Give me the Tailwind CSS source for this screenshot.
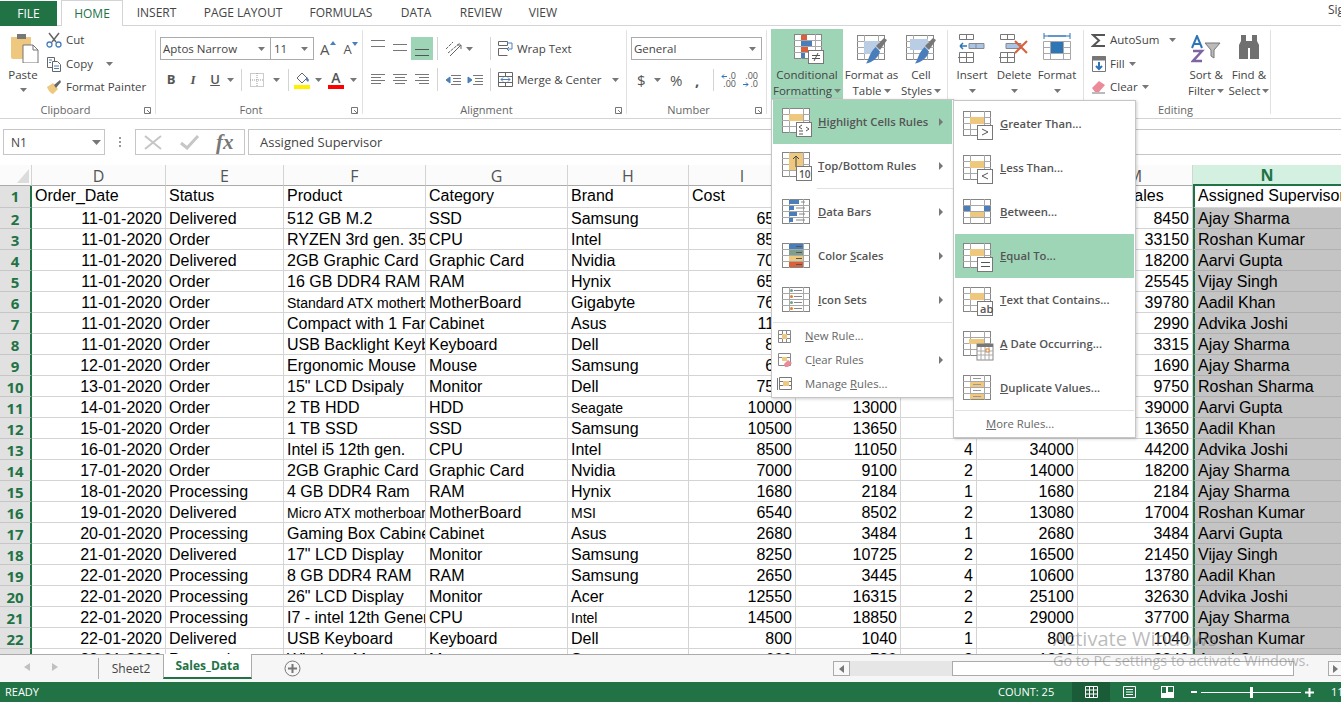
<!DOCTYPE html>
<html lang="en">
  <head>
    <meta charset="UTF-8" />
    <title>Sales_Data - Excel</title>
    <script src="https://cdn.jsdelivr.net/npm/@tailwindcss/browser@4"></script>
  </head>
  <body class="relative w-[1341px] h-[702px] overflow-hidden flex flex-col bg-white text-[#444] font-['Open_Sans',sans-serif] text-[12px]">
    <svg class="hidden">
      <defs>
        <g id="grid" fill="none" stroke="#858585">
          <rect x="0.5" y="0.5" width="27" height="24" fill="#fff" />
          <path d="M7.5 0v25M21.5 0v25M0 6.5h28M0 12.5h28M0 18.5h28" stroke="#a8a8a8" />
        </g>
        <g id="brush">
          <path d="M30 5l-3-2-8 8 4 4z" fill="#777" />
          <path d="M18.500 12l4.500 4.500c-2 7-8 11-14 12 3-4 3-10 9.500-16.500z" fill="#4a7ebb" />
        </g>
        <path id="arrow" d="M0 0h7l-3.500 4z" fill="#777" />
        <path id="chev" d="M0 0l4 4-4 4z" fill="#777" />
      </defs>
    </svg>

    <!-- tab strip -->
    <div class="h-[26px] shrink-0 flex items-end border-b border-[#d4d4d4]">
      <div class="w-[57px] h-[25px] mb-[-1px] bg-[#217346] text-white flex items-center justify-center">FILE</div>
      <div class="w-[62px] h-[26px] mb-[-1px] ml-[4px] bg-white border border-b-0 border-[#d4d4d4] text-[#217346] flex items-center justify-center">HOME</div>
      <div class="w-[67px] h-[25px] flex items-center justify-center">INSERT</div>
      <div class="w-[106px] h-[25px] flex items-center justify-center">PAGE LAYOUT</div>
      <div class="w-[90px] h-[25px] flex items-center justify-center">FORMULAS</div>
      <div class="w-[60px] h-[25px] flex items-center justify-center">DATA</div>
      <div class="w-[70px] h-[25px] flex items-center justify-center">REVIEW</div>
      <div class="w-[54px] h-[25px] flex items-center justify-center">VIEW</div>
      <div class="ml-[758px] w-[13px] h-[25px] overflow-hidden whitespace-nowrap pt-[1px]">Sign in</div>
    </div>

    <!-- ribbon -->
    <div class="h-[93px] shrink-0 flex border-b border-[#d4d4d4] pt-[4px] text-[11.5px] whitespace-nowrap">
      <!-- clipboard -->
      <div class="w-[156px] h-[84px] border-r border-[#e1e1e1] flex flex-col">
        <div class="h-[72px] flex">
          <div class="w-[46px] flex flex-col items-center">
            <svg class="mt-[3px] ml-[3px]" width="30" height="30" viewBox="0 0 30 30">
              <path d="M1 4h20v22H3a2 2 0 0 1-2-2z" fill="#edc87e" />
              <rect x="7" y="1" width="9" height="5" fill="#777" />
              <path d="M13 12h10l5 5v13H13z" fill="#fff" stroke="#777" />
              <path d="M23 12v5h5" fill="none" stroke="#777" />
            </svg>
            <div class="mt-[4px] leading-[16px]">Paste</div>
            <svg class="mt-[5px]" width="7" height="4"><use href="#arrow" /></svg>
          </div>
          <div class="flex flex-col mt-[-2px]">
            <div class="h-[24px] flex items-center gap-[4px]">
              <svg width="16" height="16" viewBox="0 0 16 16" fill="none" stroke="#4a7ebb" stroke-width="1.3"><circle cx="3.500" cy="12.500" r="2.500" /><circle cx="12.500" cy="12.500" r="2.500" /><path d="M3 1l7 9M13 1l-7 9" stroke="#666" stroke-width="1.500" /></svg>
              <span>Cut</span>
            </div>
            <div class="h-[23px] flex items-center gap-[4px]">
              <svg width="16" height="16" viewBox="0 0 16 16" fill="#fff" stroke="#666"><path d="M1.500 1.500h7v10h-7z" /><path d="M6.500 5.500h5l3 3v7h-8z" /><path d="M3 4h3M3 6.500h2M8 10h5M8 12.500h5" stroke="#4a7ebb" /></svg>
              <span>Copy</span>
              <svg class="ml-[9px]" width="7" height="4"><use href="#arrow" /></svg>
            </div>
            <div class="h-[23px] flex items-center gap-[4px]">
              <svg width="16" height="16" viewBox="0 0 16 16"><path d="M1 8l6-4 5 6-5 5c-2 0-5-4-6-7z" fill="#edc87e" /><path d="M8 6l6-5 1 2-5 6z" fill="#666" /></svg>
              <span>Format Painter</span>
            </div>
          </div>
        </div>
        <div class="h-[12px] grid grid-cols-[1fr_auto_1fr] items-center leading-[16px] text-[#666] text-[11px] pr-[4px]">
          <span></span><span class="mr-[20px]">Clipboard</span>
          <svg class="justify-self-end" width="7" height="7" fill="none" stroke="#777"><path d="M.5.5h6v6h-6zM3 3l3 3" /></svg>
        </div>
      </div>

      <!-- font -->
      <div class="w-[207px] h-[84px] border-r border-[#e1e1e1] flex flex-col pl-[4px]">
        <div class="h-[72px] flex flex-col">
          <div class="flex items-center mt-[7px] h-[23px]">
            <div class="w-[111px] h-[23px] border border-[#ababab] flex items-center justify-between pl-[2px] pr-[5px]">
              <span>Aptos Narrow</span><svg width="7" height="4"><use href="#arrow" /></svg>
            </div>
            <div class="w-[43px] h-[23px] border border-l-0 border-[#ababab] flex items-center justify-between pl-[3px] pr-[5px]">
              <span>11</span><svg width="7" height="4"><use href="#arrow" /></svg>
            </div>
            <div class="ml-[6px] flex items-end text-[15px] leading-none text-[#555]">A<svg class="mb-[12px]" width="6" height="4"><path d="M3 0l3 4H0z" fill="#4a7ebb" /></svg></div>
            <div class="ml-[8px] flex items-end text-[13px] leading-none text-[#555]">A<svg class="mb-[10px]" width="6" height="4"><path d="M0 0h6L3 4z" fill="#4a7ebb" /></svg></div>
          </div>
          <div class="flex items-center mt-[9px] h-[22px] text-[13px] text-[#555]">
            <span class="w-[22px] text-center font-bold">B</span>
            <span class="w-[22px] text-center italic font-['Liberation_Serif'] font-bold">I</span>
            <span class="w-[22px] text-center font-semibold underline">U</span>
            <svg class="ml-[1px]" width="7" height="4"><use href="#arrow" /></svg>
            <div class="w-px h-[22px] bg-[#d4d4d4] ml-[7px]"></div>
            <svg class="ml-[8px]" width="14" height="14" fill="none" stroke="#999" stroke-dasharray="1 1"><path d="M.5.5h13v13H.5zM7 0v14M0 7h14" /></svg>
            <svg class="ml-[9px]" width="7" height="4"><use href="#arrow" /></svg>
            <div class="w-px h-[22px] bg-[#d4d4d4] ml-[8px]"></div>
            <div class="ml-[5px] flex flex-col">
              <svg width="16" height="12" viewBox="0 0 16 12"><path d="M3 6l5-5 5 5-5 5z" fill="#fff" stroke="#666" /><path d="M13 5l2 3-1 2-2-2z" fill="#4a7ebb" /></svg>
              <div class="w-[16px] h-[4px] mt-[1px] bg-[#ffef00]"></div>
            </div>
            <svg class="ml-[5px]" width="7" height="4"><use href="#arrow" /></svg>
            <div class="ml-[6px] flex flex-col items-center">
              <span class="text-[14px] leading-[12px] font-semibold text-[#555]">A</span>
              <div class="w-[16px] h-[4px] mt-[1px] bg-[#ff0000]"></div>
            </div>
            <svg class="ml-[6px]" width="7" height="4"><use href="#arrow" /></svg>
          </div>
        </div>
        <div class="h-[12px] grid grid-cols-[1fr_auto_1fr] items-center leading-[16px] text-[#666] text-[11px] pr-[4px]">
          <span></span><span class="mr-[16px]">Font</span>
          <svg class="justify-self-end" width="7" height="7" fill="none" stroke="#777"><path d="M.5.5h6v6h-6zM3 3l3 3" /></svg>
        </div>
      </div>

      <!-- alignment -->
      <div class="w-[264px] h-[84px] border-r border-[#e1e1e1] flex flex-col">
        <div class="h-[72px] flex pl-[4px]">
          <div class="flex flex-col">
            <div class="flex h-[23px] mt-[7px]">
              <div class="w-[22px] flex justify-center pt-[3px]"><svg width="14" height="7" stroke="#777"><path d="M0 .5h14M0 6.500h14" /></svg></div>
              <div class="w-[22px] flex justify-center pt-[7px]"><svg width="14" height="7" stroke="#777"><path d="M0 .5h14M0 6.500h14" /></svg></div>
              <div class="w-[22px] h-[23px] bg-[#9fd5b7] flex justify-center pt-[12px]"><svg width="14" height="7" stroke="#555"><path d="M0 .5h14M0 6.500h14" /></svg></div>
            </div>
            <div class="flex h-[23px] mt-[7px] items-center">
              <div class="w-[22px] flex justify-center"><svg width="14" height="10" stroke="#777"><path d="M0 .5h14M0 3.500h10M0 6.500h14M0 9.500h10" /></svg></div>
              <div class="w-[22px] flex justify-center"><svg width="14" height="10" stroke="#777"><path d="M0 .5h14M2 3.500h10M0 6.500h14M2 9.500h10" /></svg></div>
              <div class="w-[22px] flex justify-center"><svg width="14" height="10" stroke="#777"><path d="M0 .5h14M4 3.500h10M0 6.500h14M4 9.500h10" /></svg></div>
            </div>
          </div>
          <div class="w-[53px] flex flex-col ml-[4px]">
            <div class="flex h-[23px] mt-[7px] items-center border-l border-[#d4d4d4] pl-[7px] gap-[4px]">
              <svg width="17" height="17" viewBox="0 0 17 17" fill="none" stroke="#666"><path d="M1 9l7-7M3 13l12-10" stroke-dasharray="3 1" /><path d="M5 16L16 5M12 5h4v4" /></svg>
              <svg width="7" height="4"><use href="#arrow" /></svg>
            </div>
            <div class="flex h-[23px] mt-[8px] items-center border-l border-[#d4d4d4] pl-[7px] gap-[6px]">
              <svg width="16" height="10" fill="none" stroke="#777"><path d="M6 .5h10M8 3.500h8M8 6.500h8M6 9.500h10" /><path d="M5 2L1 5l4 3z" fill="#4a7ebb" stroke="#4a7ebb" /></svg>
              <svg width="16" height="10" fill="none" stroke="#777"><path d="M6 .5h10M8 3.500h8M8 6.500h8M6 9.500h10" /><path d="M1 2l4 3-4 3z" fill="#4a7ebb" stroke="#4a7ebb" /></svg>
            </div>
          </div>
          <div class="flex flex-col">
            <div class="flex h-[23px] mt-[7px] items-center border-l border-[#d4d4d4] pl-[7px] gap-[4px]">
              <svg width="15" height="15" viewBox="0 0 15 15" fill="none" stroke="#666"><path d="M.5.5h9v4h-9zM.5 7.500h9M.5 7.500v7h9" /><path d="M9 2h5M14 2v6h-5M11 6l-2 2 2 2" stroke="#4a7ebb" /></svg>
              <span>Wrap Text</span>
            </div>
            <div class="flex h-[23px] mt-[8px] items-center border-l border-[#d4d4d4] pl-[7px] gap-[4px]">
              <svg width="15" height="15" viewBox="0 0 15 15" fill="none" stroke="#666"><path d="M.5.5h14v14H.5zM0 4.500h15M0 10.500h15M7.500 0v4M7.500 11v4" /><path d="M3 7.500h9M3 7.500l2-2M3 7.500l2 2M12 7.500l-2-2M12 7.500l-2 2" stroke="#4a7ebb" /></svg>
              <span>Merge &amp; Center</span>
              <svg class="ml-[6px]" width="7" height="4"><use href="#arrow" /></svg>
            </div>
          </div>
        </div>
        <div class="h-[12px] grid grid-cols-[1fr_auto_1fr] items-center leading-[16px] text-[#666] text-[11px] pr-[4px]">
          <span></span><span class="mr-[12px]">Alignment</span>
          <svg class="justify-self-end" width="7" height="7" fill="none" stroke="#777"><path d="M.5.5h6v6h-6zM3 3l3 3" /></svg>
        </div>
      </div>

      <!-- number -->
      <div class="w-[140px] h-[84px] border-r border-[#e1e1e1] flex flex-col pl-[4px]">
        <div class="h-[72px] flex flex-col">
          <div class="w-[131px] h-[23px] mt-[7px] border border-[#ababab] flex items-center justify-between pl-[2px] pr-[5px]">
            <span>General</span><svg width="7" height="4"><use href="#arrow" /></svg>
          </div>
          <div class="flex items-center h-[22px] mt-[9px] text-[15px] text-[#555]">
            <span class="ml-[6px] w-[12px]">$</span>
            <svg class="ml-[5px]" width="7" height="4"><use href="#arrow" /></svg>
            <span class="ml-[9px] w-[20px]">%</span>
            <span class="ml-[5px] w-[10px] font-bold">,</span>
            <div class="w-px h-[22px] bg-[#d4d4d4] ml-[8px]"></div>
            <div class="ml-[7px] w-[15px] text-[9px] leading-[8px] text-right">
              <div class="flex items-center justify-end gap-px"><svg width="6" height="5" fill="none" stroke="#2e75b6"><path d="M6 2.500H1M3 .5l-2 2 2 2" /></svg>.0</div>
              <div>.00</div>
            </div>
            <div class="ml-[7px] w-[15px] text-[9px] leading-[8px] text-right">
              <div>.00</div>
              <div class="flex items-center justify-end gap-px"><svg width="6" height="5" fill="none" stroke="#2e75b6"><path d="M0 2.500h5M3 .5l2 2-2 2" /></svg>.0</div>
            </div>
          </div>
        </div>
        <div class="h-[12px] grid grid-cols-[1fr_auto_1fr] items-center leading-[16px] text-[#666] text-[11px] pr-[4px]">
          <span></span><span class="mr-[16px]">Number</span>
          <svg class="justify-self-end" width="7" height="7" fill="none" stroke="#777"><path d="M.5.5h6v6h-6zM3 3l3 3" /></svg>
        </div>
      </div>

      <!-- styles -->
      <div class="w-[181px] h-[84px] border-r border-[#e1e1e1] flex pl-[4px]">
        <div class="w-[72px] h-[70px] mt-[-1px] bg-[#9fd5b7] flex flex-col items-center text-center leading-[16px]">
          <svg class="mt-[5px] ml-[3px]" width="30" height="30" viewBox="0 0 30 30">
            <use href="#grid" />
            <path d="M7 1h6v5H7z" fill="#d9603b" /><path d="M7 7h11v5H7z" fill="#4a7ebb" /><path d="M7 13h7v5H7z" fill="#d9603b" /><path d="M7 19h4v5H7z" fill="#4a7ebb" />
            <rect x="14.500" y="16.500" width="15" height="13" fill="#fff" stroke="#777" />
            <path d="M18 21.500h8M18 24.500h8M24 19l-4 8" stroke="#555" fill="none" />
          </svg>
          <div class="mt-[3px]">Conditional</div>
          <div class="flex items-center gap-[2px]">Formatting<svg width="7" height="4"><use href="#arrow" /></svg></div>
        </div>
        <div class="w-[55px] ml-[1px] flex flex-col items-center text-center leading-[16px]">
          <svg class="mt-[5px]" width="30" height="30" viewBox="0 0 30 30">
            <use href="#grid" />
            <rect x="7" y="6" width="15" height="13" fill="#b9cde5" />
            <use href="#brush" />
          </svg>
          <div class="mt-[2px]">Format as</div>
          <div class="flex items-center gap-[2px]">Table<svg width="7" height="4"><use href="#arrow" /></svg></div>
        </div>
        <div class="w-[44px] flex flex-col items-center text-center leading-[16px]">
          <svg class="mt-[5px]" width="30" height="30" viewBox="0 0 30 30">
            <use href="#grid" />
            <rect x="4" y="4" width="18" height="11" fill="#b9cde5" />
            <use href="#brush" />
          </svg>
          <div class="mt-[2px]">Cell</div>
          <div class="flex items-center gap-[2px]">Styles<svg width="7" height="4"><use href="#arrow" /></svg></div>
        </div>
      </div>

      <!-- cells -->
      <div class="w-[136px] h-[84px] border-r border-[#e1e1e1] flex pl-[3px] text-center leading-[16px]">
        <div class="w-[42px] flex flex-col items-center">
          <svg class="mt-[3px]" width="28" height="30" viewBox="0 0 28 30" fill="none" stroke="#777"><path d="M1.500 1.500h14v5h-14zM8.500 1v5M1.500 19.500h14v10h-14zM0 24.500h16M8.500 19v10" /><path d="M11 10.500h15v5H11zM18 10v5" fill="#a9c4e4" stroke="#888" /><path d="M2 13h7M2 13l3-3M2 13l3 3" stroke="#2e75b6" stroke-width="1.500" /></svg>
          <div class="mt-[4px]">Insert</div>
          <svg class="mt-[6px]" width="7" height="4"><use href="#arrow" /></svg>
        </div>
        <div class="w-[42px] flex flex-col items-center">
          <svg class="mt-[3px]" width="30" height="30" viewBox="0 0 30 30" fill="none" stroke="#777"><path d="M1.500 1.500h14v5h-14zM8.500 1v5M1.500 19.500h14v10h-14zM0 24.500h16M8.500 19v10" /><path d="M7 10.500h15v5H7z" fill="#a9c4e4" stroke="#888" /><path d="M16 8l12 12M28 8L16 20" stroke="#d9603b" stroke-width="2" /></svg>
          <div class="mt-[4px]">Delete</div>
          <svg class="mt-[6px]" width="7" height="4"><use href="#arrow" /></svg>
        </div>
        <div class="w-[44px] flex flex-col items-center">
          <svg class="mt-[3px]" width="28" height="30" viewBox="0 0 28 30" fill="none" stroke="#777"><path d="M1 3h26M1 0v6M27 0v6M5 3h18" stroke="#2e75b6" /><path d="M.5 8.500h27v18H.5zM7.500 8v18M20.500 8v18M0 14.500h28M0 20.500h28" stroke="#a8a8a8" /><rect x="8" y="9" width="12" height="11" fill="#2e75b6" stroke="none" /></svg>
          <div class="mt-[4px]">Format</div>
          <svg class="mt-[6px]" width="7" height="4"><use href="#arrow" /></svg>
        </div>
      </div>

      <!-- editing -->
      <div class="w-[187px] h-[84px] border-r border-[#e1e1e1] flex flex-col pl-[7px]">
        <div class="h-[72px] flex">
          <div class="w-[95px] flex flex-col mt-[-2px]">
            <div class="h-[24px] flex items-center gap-[4px]">
              <svg width="15" height="15" viewBox="0 0 15 15" fill="none" stroke="#555" stroke-width="2"><path d="M14 2H2l6 5.500L2 13h12" /></svg>
              <span>AutoSum</span>
              <svg class="ml-[6px]" width="7" height="4"><use href="#arrow" /></svg>
            </div>
            <div class="h-[23px] flex items-center gap-[4px] pl-[1px]">
              <svg width="14" height="16" viewBox="0 0 14 16" fill="none" stroke="#777"><path d="M.5.5h13v15H.5z" /><path d="M0 1h14v3H0z" fill="#777" /><path d="M7 6v7M4 10l3 3 3-3" stroke="#2e75b6" stroke-width="2" /></svg>
              <span>Fill</span>
              <svg width="7" height="4"><use href="#arrow" /></svg>
            </div>
            <div class="h-[23px] flex items-center gap-[4px]">
              <svg width="15" height="15" viewBox="0 0 15 15"><path d="M1 9l7-7 6 4-6 7H4z" fill="#ec8a9a" /><path d="M1 14h13" stroke="#777" /></svg>
              <span>Clear</span>
              <svg width="7" height="4"><use href="#arrow" /></svg>
            </div>
          </div>
          <div class="w-[44px] flex flex-col items-center text-center leading-[16px]">
            <svg class="mt-[5px]" width="30" height="28" viewBox="0 0 30 28" fill="none"><path d="M1 13L6 1l5 12M3 9h6" stroke="#2e75b6" stroke-width="2" /><path d="M2 16h9L2 26h9" stroke="#8064a2" stroke-width="2.500" /><path d="M14 8h15l-6 7v8l-3-2v-6z" fill="#bbb" stroke="#777" /></svg>
            <div class="mt-[4px]">Sort &amp;</div>
            <div class="flex items-center gap-[2px]">Filter<svg width="7" height="4"><use href="#arrow" /></svg></div>
          </div>
          <div class="w-[43px] flex flex-col items-center text-center leading-[16px]">
            <svg class="mt-[5px]" width="26" height="26" viewBox="0 0 26 26" fill="#707070"><path d="M5 0h5v6h6V0h5v6l2 4v14h-9V13h-2v11H3V10l2-4z" /></svg>
            <div class="mt-[6px]">Find &amp;</div>
            <div class="flex items-center gap-[2px]">Select<svg width="7" height="4"><use href="#arrow" /></svg></div>
          </div>
        </div>
        <div class="h-[12px] text-center leading-[16px] text-[#666] text-[11px] pr-[10px]">Editing</div>
      </div>
    </div>

    <!-- formula bar -->
    <div class="h-[46px] shrink-0 flex items-start pt-[10px]">
      <div class="ml-[3px] w-[102px] h-[26px] pt-px border border-[#c6c6c6] flex items-center justify-between pl-[7px] pr-[3px] text-[12px]">
        <span>N1</span><svg width="9" height="5"><path d="M0 0h9L4.500 5z" fill="#777" /></svg>
      </div>
      <div class="w-[30px] h-[26px] flex items-center justify-center"><svg width="3" height="11" fill="#999"><rect width="2" height="2" /><rect y="4" width="2" height="2" /><rect y="8" width="2" height="2" /></svg></div>
      <div class="w-[110px] h-[26px] border border-[#c6c6c6] flex items-center pl-[7px]">
        <svg width="20" height="15" fill="none" stroke="#c6c6c6" stroke-width="2"><path d="M2 1l16 13M18 1L2 14" /></svg>
        <svg class="ml-[17px]" width="20" height="15" fill="none" stroke="#c6c6c6" stroke-width="3"><path d="M1 8l6 5L18 1" /></svg>
        <span class="ml-[16px] font-['Liberation_Serif'] italic font-bold text-[21px] leading-none text-[#777]">fx</span>
      </div>
      <div class="ml-[3px] flex-1 h-[26px] pt-px border border-r-0 border-[#c6c6c6] flex items-center pl-[11px] text-[13px]">Assigned Supervisor</div>
    </div>

    <!-- sheet -->
    <div class="h-[489px] shrink-0 overflow-hidden font-['Liberation_Sans',Arial,sans-serif] text-[16px] text-black">
      <table class="table-fixed border-separate border-spacing-0 w-[1341px] [&_td]:h-[21px] [&_td]:p-0 [&_td]:px-[3px] [&_td]:pt-[2px] [&_td]:leading-[18px] [&_td]:whitespace-nowrap [&_td]:overflow-hidden [&_td]:border-r [&_td]:border-b [&_td]:border-[#d4d4d4] [&_tbody_th]:border-r-2 [&_tbody_th]:border-b [&_tbody_th]:border-r-[#217346] [&_tbody_th]:border-b-[#c6c6c6] [&_tbody_th]:bg-[#e1e1e1] [&_tbody_th]:text-[#217346] [&_tbody_th]:font-['Open_Sans'] [&_tbody_th]:font-bold [&_tbody_th]:text-[15px] [&_tbody_th]:leading-[18px] [&_tbody_th]:p-0 [&_tbody_th]:pt-[2px] [&_thead_th]:h-[20px] [&_thead_th]:p-0 [&_thead_th]:pt-px [&_thead_th]:font-normal [&_thead_th]:font-['Open_Sans'] [&_thead_th]:text-[#555] [&_thead_th]:leading-[18px] [&_thead_th]:bg-[#fbfbfb] [&_thead_th]:border-r [&_thead_th]:border-r-[#d4d4d4] [&_thead_th]:border-b [&_thead_th]:border-b-[#ababab] [&_td:nth-child(2)]:text-right [&_td:nth-child(7)]:text-right [&_td:nth-child(8)]:text-right [&_td:nth-child(9)]:text-right [&_td:nth-child(10)]:text-right [&_td:nth-child(11)]:text-right [&_td:nth-child(12)]:bg-[#c4c4c4] [&_td:nth-child(12)]:border-l-2 [&_td:nth-child(12)]:border-l-[#217346] [&_td:nth-child(12)]:border-b-[#b0b0b0] [&_td:nth-child(12)]:border-r-0">
        <colgroup>
          <col class="w-[32px]" /><col class="w-[134px]" /><col class="w-[118px]" /><col class="w-[142px]" /><col class="w-[142px]" /><col class="w-[121px]" /><col class="w-[107px]" /><col class="w-[105px]" /><col class="w-[76px]" /><col class="w-[101px]" /><col class="w-[115px]" /><col class="w-[148px]" />
        </colgroup>
        <thead>
          <tr>
            <th><svg class="ml-[17px]" width="12" height="14"><path d="M12 0v14H0z" fill="#dcdcdc" /></svg></th>
            <th>D</th><th>E</th><th>F</th><th>G</th><th>H</th><th>I</th><th>J</th><th>K</th><th>L</th><th>M</th>
            <th class="bg-[#d3f0e0]! text-[#217346]! font-bold! border-b-2! border-b-[#217346]! border-r-0!">N</th>
          </tr>
        </thead>
        <tbody>
          <tr class="[&>td]:text-left! [&>td]:h-[22px]! [&>td]:pt-0! [&>td]:pb-px! [&>td]:leading-[20px]! [&>th]:pt-0! [&>th]:pb-px! [&>td:nth-child(12)]:bg-white! [&>td:nth-child(12)]:border-b-[#d4d4d4]!"><th>1</th><td>Order_Date</td><td>Status</td><td>Product</td><td>Category</td><td>Brand</td><td>Cost</td><td>Selling_Price</td><td>Qty</td><td>Total_Cost</td><td>Total_Sales</td><td>Assigned Supervisor</td></tr>
          <tr><th>2</th><td>11-01-2020</td><td>Delivered</td><td>512 GB M.2</td><td>SSD</td><td>Samsung</td><td>6500</td><td>8450</td><td>1</td><td>6500</td><td>8450</td><td>Ajay Sharma</td></tr>
          <tr><th>3</th><td>11-01-2020</td><td>Order</td><td>RYZEN 3rd gen. 3500</td><td>CPU</td><td>Intel</td><td>8500</td><td>11050</td><td>3</td><td>25500</td><td>33150</td><td>Roshan Kumar</td></tr>
          <tr><th>4</th><td>11-01-2020</td><td>Delivered</td><td>2GB Graphic Card</td><td>Graphic Card</td><td>Nvidia</td><td>7000</td><td>9100</td><td>2</td><td>14000</td><td>18200</td><td>Aarvi Gupta</td></tr>
          <tr><th>5</th><td>11-01-2020</td><td>Order</td><td>16 GB DDR4 RAM</td><td>RAM</td><td>Hynix</td><td>6550</td><td>8515</td><td>3</td><td>19650</td><td>25545</td><td>Vijay Singh</td></tr>
          <tr><th>6</th><td>11-01-2020</td><td>Order</td><td class="text-sm">Standard ATX motherboard</td><td>MotherBoard</td><td>Gigabyte</td><td>7650</td><td>9945</td><td>4</td><td>30600</td><td>39780</td><td>Aadil Khan</td></tr>
          <tr><th>7</th><td>11-01-2020</td><td>Order</td><td>Compact with 1 Fan</td><td>Cabinet</td><td>Asus</td><td>1150</td><td>1495</td><td>2</td><td>2300</td><td>2990</td><td>Advika Joshi</td></tr>
          <tr><th>8</th><td>11-01-2020</td><td>Order</td><td>USB Backlight Keyboard</td><td>Keyboard</td><td>Dell</td><td>850</td><td>1105</td><td>3</td><td>2550</td><td>3315</td><td>Ajay Sharma</td></tr>
          <tr><th>9</th><td>12-01-2020</td><td>Order</td><td>Ergonomic Mouse</td><td>Mouse</td><td>Samsung</td><td>650</td><td>845</td><td>2</td><td>1300</td><td>1690</td><td>Ajay Sharma</td></tr>
          <tr><th>10</th><td>13-01-2020</td><td>Order</td><td>15" LCD Dsipaly</td><td>Monitor</td><td>Dell</td><td>7500</td><td>9750</td><td>1</td><td>7500</td><td>9750</td><td>Roshan Sharma</td></tr>
          <tr><th>11</th><td>14-01-2020</td><td>Order</td><td>2 TB HDD</td><td>HDD</td><td class="text-sm">Seagate</td><td>10000</td><td>13000</td><td>3</td><td>30000</td><td>39000</td><td>Aarvi Gupta</td></tr>
          <tr><th>12</th><td>15-01-2020</td><td>Order</td><td>1 TB SSD</td><td>SSD</td><td>Samsung</td><td>10500</td><td>13650</td><td>1</td><td>10500</td><td>13650</td><td>Aadil Khan</td></tr>
          <tr><th>13</th><td>16-01-2020</td><td>Order</td><td>Intel i5 12th gen.</td><td>CPU</td><td>Intel</td><td>8500</td><td>11050</td><td>4</td><td>34000</td><td>44200</td><td>Advika Joshi</td></tr>
          <tr><th>14</th><td>17-01-2020</td><td>Order</td><td>2GB Graphic Card</td><td>Graphic Card</td><td>Nvidia</td><td>7000</td><td>9100</td><td>2</td><td>14000</td><td>18200</td><td>Ajay Sharma</td></tr>
          <tr><th>15</th><td>18-01-2020</td><td>Processing</td><td>4 GB DDR4 Ram</td><td>RAM</td><td>Hynix</td><td>1680</td><td>2184</td><td>1</td><td>1680</td><td>2184</td><td>Ajay Sharma</td></tr>
          <tr><th>16</th><td>19-01-2020</td><td>Delivered</td><td class="text-sm">Micro ATX motherboard</td><td>MotherBoard</td><td class="text-sm">MSI</td><td>6540</td><td>8502</td><td>2</td><td>13080</td><td>17004</td><td>Roshan Kumar</td></tr>
          <tr><th>17</th><td>20-01-2020</td><td>Processing</td><td>Gaming Box Cabinet</td><td>Cabinet</td><td>Asus</td><td>2680</td><td>3484</td><td>1</td><td>2680</td><td>3484</td><td>Aarvi Gupta</td></tr>
          <tr><th>18</th><td>21-01-2020</td><td>Delivered</td><td>17" LCD Display</td><td>Monitor</td><td>Samsung</td><td>8250</td><td>10725</td><td>2</td><td>16500</td><td>21450</td><td>Vijay Singh</td></tr>
          <tr><th>19</th><td>22-01-2020</td><td>Processing</td><td>8 GB DDR4 RAM</td><td>RAM</td><td>Samsung</td><td>2650</td><td>3445</td><td>4</td><td>10600</td><td>13780</td><td>Aadil Khan</td></tr>
          <tr><th>20</th><td>22-01-2020</td><td>Processing</td><td>26" LCD Display</td><td>Monitor</td><td>Acer</td><td>12550</td><td>16315</td><td>2</td><td>25100</td><td>32630</td><td>Advika Joshi</td></tr>
          <tr><th>21</th><td>22-01-2020</td><td>Processing</td><td>I7 - intel 12th Generation</td><td>CPU</td><td class="text-sm">Intel</td><td>14500</td><td>18850</td><td>2</td><td>29000</td><td>37700</td><td>Ajay Sharma</td></tr>
          <tr><th>22</th><td>22-01-2020</td><td>Delivered</td><td>USB Keyboard</td><td>Keyboard</td><td>Dell</td><td>800</td><td>1040</td><td>1</td><td>800</td><td>1040</td><td>Roshan Kumar</td></tr>
          <tr><th>23</th><td>22-01-2020</td><td>Processing</td><td>Wireless Mouse</td><td>Mouse</td><td>Samsung</td><td>600</td><td>780</td><td>3</td><td>1800</td><td>2340</td><td>Aarvi Gupta</td></tr>
        </tbody>
      </table>
    </div>

    <!-- sheet tabs and scrollbar -->
    <div class="h-[28px] shrink-0 bg-[#f6f6f6] border-t border-[#ababab] flex items-start">
      <div class="w-[98px] h-[24px] flex items-center pl-[24px] gap-[22px]">
        <svg width="6" height="8"><path d="M6 0v8L0 4z" fill="#c0c0c0" /></svg>
        <svg width="6" height="8"><path d="M0 0v8l6-4z" fill="#c0c0c0" /></svg>
      </div>
      <div class="w-[65px] h-[21px] mt-[3px] border-l border-[#ababab] flex items-center justify-center">Sheet2</div>
      <div class="w-[89px] h-[25px] mt-[-1px] bg-white border-x border-[#ababab] border-b-2 border-b-[#217346] flex items-center justify-center font-bold text-[#217346]">Sales_Data</div>
      <div class="ml-[32px] mt-[5px]"><svg width="17" height="17" fill="none" stroke="#777"><circle cx="8.500" cy="8.500" r="7.500" /><path d="M4 8.500h9M8.500 4v9" stroke-width="2" /></svg></div>
      <div class="ml-[532px] mt-[6px] w-[508px] h-[15px] flex bg-[#e6e6e6]">
        <div class="w-[17px] h-[15px] bg-[#f8f8f8] border border-[#ababab] flex items-center justify-center"><svg width="5" height="8"><path d="M5 0v8L0 4z" fill="#777" /></svg></div>
        <div class="ml-[102px] w-[342px] h-[15px] bg-white border border-[#ababab]"></div>
        <div class="w-[34px] h-[15px] bg-[#f6f6f6]"></div>
        <div class="w-[13px] h-[15px] bg-[#f8f8f8] border border-r-0 border-[#ababab] flex items-center justify-center"><svg width="5" height="8"><path d="M0 0v8l5-4z" fill="#777" /></svg></div>
      </div>
    </div>

    <!-- status bar -->
    <div class="h-[20px] shrink-0 bg-[#217346] text-white flex items-center text-[11px] whitespace-nowrap [&>*]:shrink-0">
      <span class="ml-[5px] w-[37px]">READY</span>
      <span class="ml-[956px] w-[74px]">COUNT: 25</span>
      <div class="w-[38px] h-[20px] bg-[#1a5c38] flex items-center justify-center"><svg width="13" height="12" fill="none" stroke="#fff"><path d="M.5.500h12v11H.5zM4.500 0v12M8.500 0v12M0 4h13M0 8h13" /></svg></div>
      <div class="w-[38px] flex items-center justify-center"><svg width="13" height="12" fill="none" stroke="#fff"><path d="M.5.500h12v11H.5zM3 3.500h7M3 6h7M3 8.500h7" /></svg></div>
      <div class="w-[38px] flex items-center justify-center"><svg width="13" height="12"><path d="M0 0h13v12H0z" fill="#fff" /><path d="M6 0v7M1 1h4v6H1zM7 1h5v5H7z" fill="#217346" /></svg></div>
      <div class="ml-[5px] flex items-center">
        <div class="w-[6px] h-[2px] bg-white"></div>
        <div class="ml-[4px] w-[100px] h-px bg-white flex justify-center items-center"><div class="w-[3px] h-[11px] bg-white"></div></div>
        <svg class="ml-[4px]" width="9" height="9" fill="#fff"><path d="M0 3.500h9v2H0zM3.500 0h2v9h-2z" /></svg>
      </div>
      <span class="ml-[17px]">110%</span>
    </div>

    <!-- conditional formatting menu -->
    <div class="absolute left-[771px] top-[99px] w-[183px] h-[299px] bg-white border border-[#c6c6c6] shadow-[1px_1px_3px_rgba(0,0,0,0.2)] flex flex-col font-semibold text-[#555] text-[11.3px] whitespace-nowrap">
      <div class="h-[44px] mx-px bg-[#9fd5b7] flex items-center pl-[9px]">
        <svg class="w-[36px] mt-[2px]" height="30" viewBox="0 0 36 30"><use href="#grid" /><rect x="7" y="6" width="14" height="7" fill="#edc87e" /><rect x="14.500" y="14.500" width="15" height="14" fill="#fff" stroke="#777" /><path d="M20 17l-3 2 3 2M17 23h4M17 26h4M24 19l3 2-3 2" stroke="#555" fill="none" /></svg>
        <span class="flex-1"><u>H</u>ighlight Cells Rules</span>
        <svg class="mr-[9px]" width="4" height="8"><use href="#chev" /></svg>
      </div>
      <div class="h-[44px] mx-px flex items-center pl-[9px]">
        <svg class="w-[36px] mt-[2px]" height="30" viewBox="0 0 36 30"><use href="#grid" /><rect x="7" y="1" width="14" height="17" fill="#edc87e" /><path d="M14 4v11M11 7l3-3 3 3" stroke="#444" fill="none" /><rect x="14.500" y="14.500" width="15" height="14" fill="#fff" stroke="#777" /><text x="17" y="26" font-size="10" fill="#555" font-family="Open Sans">10</text></svg>
        <span class="flex-1"><u>T</u>op/Bottom Rules</span>
        <svg class="mr-[9px]" width="4" height="8"><use href="#chev" /></svg>
      </div>
      <div class="h-px mb-px ml-[45px] bg-[#e1e1e1]"></div>
      <div class="h-[44px] mx-px flex items-center pl-[9px]">
        <svg class="w-[36px]" height="26" viewBox="0 0 36 26"><use href="#grid" /><path d="M7 1h10v4H7zM7 7h5v4H7zM7 13h8v4H7zM7 19h4v4H7z" fill="#4a7ebb" /><path d="M19 3h4M14 9h9M17 15h6M14 21h9" stroke="#888" /></svg>
        <span class="flex-1"><u>D</u>ata Bars</span>
        <svg class="mr-[9px]" width="4" height="8"><use href="#chev" /></svg>
      </div>
      <div class="h-[44px] mx-px flex items-center pl-[9px]">
        <svg class="w-[36px]" height="26" viewBox="0 0 36 26"><use href="#grid" /><path d="M7 1h14v5H7z" fill="#4a7ebb" /><path d="M7 7h14v5H7z" fill="#7f9f8e" /><path d="M7 13h14v5H7z" fill="#edc87e" /><path d="M7 19h14v5H7z" fill="#d9603b" /><path d="M14 3.500h6M14 9.500h6M14 15.500h6M14 21.500h6" stroke="#555" /></svg>
        <span class="flex-1">Color <u>S</u>cales</span>
        <svg class="mr-[9px]" width="4" height="8"><use href="#chev" /></svg>
      </div>
      <div class="h-[44px] mx-px flex items-center pl-[9px]">
        <svg class="w-[36px]" height="26" viewBox="0 0 36 26"><use href="#grid" /><path d="M12 3.500h8M12 9.500h8M12 15.500h8M12 21.500h8" stroke="#888" /><circle cx="9.500" cy="3.500" r="1.500" fill="#6f9f88" /><circle cx="9.500" cy="9.500" r="1.500" fill="#e0812f" /><circle cx="9.500" cy="15.500" r="1.500" fill="#6f9f88" /><circle cx="9.500" cy="21.500" r="1.500" fill="#e0812f" /></svg>
        <span class="flex-1"><u>I</u>con Sets</span>
        <svg class="mr-[9px]" width="4" height="8"><use href="#chev" /></svg>
      </div>
      <div class="h-px mx-px mb-px bg-[#e1e1e1]"></div>
      <div class="h-[24px] mx-px flex items-center pl-[5px] font-normal text-[#666]">
        <svg class="w-[27px]" height="13" viewBox="0 0 27 13" fill="none" stroke="#888"><path d="M.5.500h12v12H.5zM0 4.500h13M0 8.500h13M4.500 0v13M8.500 0v13" /><rect x="4" y="4" width="5" height="5" fill="#edc87e" stroke="none" /></svg>
        <span class="flex-1"><u>N</u>ew Rule...</span>
      </div>
      <div class="h-[24px] mx-px flex items-center pl-[5px] font-normal text-[#666]">
        <svg class="w-[27px]" height="14" viewBox="0 0 27 14" fill="none" stroke="#888"><path d="M.5.500h12v12H.5zM0 4.500h13" /><rect x="4" y="4" width="5" height="4" fill="#edc87e" stroke="none" /><path d="M6 11l4-4 4 3-4 4H7z" fill="#ec8a9a" stroke="none" /></svg>
        <span class="flex-1">C<u>l</u>ear Rules</span>
        <svg class="mr-[9px]" width="4" height="8"><use href="#chev" /></svg>
      </div>
      <div class="h-[24px] mx-px flex items-center pl-[4px] font-normal text-[#666]">
        <svg class="w-[28px]" height="14" viewBox="0 0 28 14" fill="none" stroke="#777"><path d="M.5 1v12M2.500.5h12v12h-12zM2 4.500h13M2 8.500h13" /><rect x="6" y="4" width="6" height="5" fill="#edc87e" stroke="none" /></svg>
        <span class="flex-1">Manage <u>R</u>ules...</span>
      </div>
    </div>

    <!-- highlight cells submenu -->
    <div class="absolute left-[953px] top-[100px] w-[183px] h-[338px] bg-white border border-[#c6c6c6] shadow-[1px_1px_3px_rgba(0,0,0,0.2)] flex flex-col pt-px font-semibold text-[#555] text-[11.3px] whitespace-nowrap">
      <div class="h-[44px] mx-px flex items-center pl-[8px]">
        <svg class="w-[37px] mt-[4px]" height="30" viewBox="0 0 37 30"><use href="#grid" /><rect x="7" y="6" width="14" height="7" fill="#edc87e" /><rect x="14.500" y="14.500" width="15" height="14" fill="#fff" stroke="#777" /><path d="M19 18l6 3-6 3" stroke="#555" fill="none" /></svg>
        <span><u>G</u>reater Than...</span>
      </div>
      <div class="h-[44px] mx-px flex items-center pl-[8px]">
        <svg class="w-[37px] mt-[4px]" height="30" viewBox="0 0 37 30"><use href="#grid" /><rect x="7" y="6" width="14" height="7" fill="#edc87e" /><rect x="14.500" y="14.500" width="15" height="14" fill="#fff" stroke="#777" /><path d="M25 18l-6 3 6 3" stroke="#555" fill="none" /></svg>
        <span><u>L</u>ess Than...</span>
      </div>
      <div class="h-[44px] mx-px flex items-center pl-[8px]">
        <svg class="w-[37px]" height="26" viewBox="0 0 37 26"><use href="#grid" /><path d="M1 7h6v5H1zM21 7h6v5h-6z" fill="#4a7ebb" /><rect x="7" y="13" width="14" height="5" fill="#edc87e" /></svg>
        <span><u>B</u>etween...</span>
      </div>
      <div class="h-[44px] mx-px bg-[#9fd5b7] flex items-center pl-[8px]">
        <svg class="w-[37px] mt-[4px]" height="30" viewBox="0 0 37 30"><use href="#grid" /><rect x="7" y="6" width="14" height="7" fill="#edc87e" /><rect x="14.500" y="14.500" width="15" height="14" fill="#fff" stroke="#777" /><path d="M18 19.500h9M18 23.500h9" stroke="#555" fill="none" /></svg>
        <span><u>E</u>qual To...</span>
      </div>
      <div class="h-[44px] mx-px flex items-center pl-[8px]">
        <svg class="w-[37px] mt-[4px]" height="30" viewBox="0 0 37 30"><use href="#grid" /><rect x="7" y="6" width="14" height="7" fill="#edc87e" /><rect x="14.500" y="14.500" width="15" height="14" fill="#fff" stroke="#777" /><text x="17" y="26" font-size="11" fill="#555" font-family="Open Sans">ab</text></svg>
        <span><u>T</u>ext that Contains...</span>
      </div>
      <div class="h-[44px] mx-px flex items-center pl-[8px]">
        <svg class="w-[37px] mt-[4px]" height="30" viewBox="0 0 37 30"><use href="#grid" /><rect x="6" y="8" width="15" height="5" fill="#edc87e" /><rect x="14" y="13" width="16" height="16" fill="#fff" stroke="#888" /><rect x="14" y="13" width="16" height="3" fill="#777" /><path d="M14 20h16M14 24h16M18 16v13M22 16v13M26 16v13" stroke="#aaa" /><rect x="23" y="18" width="3" height="3" fill="#fff" stroke="#e0812f" /></svg>
        <span><u>A</u> Date Occurring...</span>
      </div>
      <div class="h-[44px] mx-px flex items-center pl-[8px]">
        <svg class="w-[37px]" height="26" viewBox="0 0 37 26"><use href="#grid" /><path d="M7 7h14v5H7zM7 19h14v5H7z" fill="#edc87e" /><path d="M10 3.500h8M10 9.500h8M10 15.500h8M10 21.500h8" stroke="#999" /></svg>
        <span><u>D</u>uplicate Values...</span>
      </div>
      <div class="h-px mx-px bg-[#e1e1e1]"></div>
      <div class="flex-1 flex items-center pl-[32px] font-normal text-[#666]"><span><u>M</u>ore Rules...</span></div>
    </div>

    <!-- activation watermark -->
    <div class="absolute left-[1053px] top-[626px] pointer-events-none text-[#777]/50 whitespace-nowrap">
      <div class="text-[20px] leading-[26px]">Activate Windows</div>
      <div class="text-[14.400px] leading-[18px]">Go to PC settings to activate Windows.</div>
    </div>
  </body>
</html>
